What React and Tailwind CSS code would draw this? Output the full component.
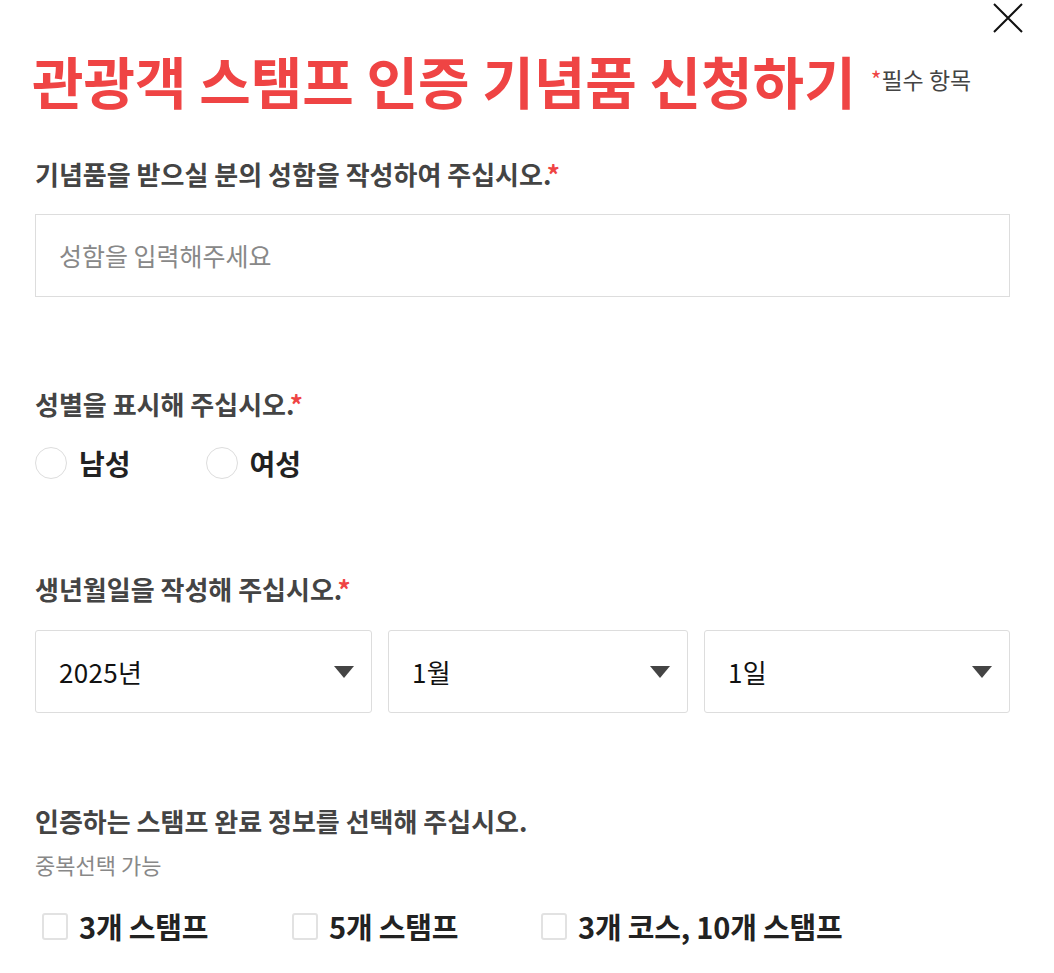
import React from "react";

const font = { fontFamily: '"Noto Sans CJK KR", "Noto Sans", sans-serif' };

function Label({ children, required }) {
  return (
    <div className="text-[26px] leading-none font-bold text-[#444444]">
      {children}
      {required && <span className="text-[#ef4444]">*</span>}
    </div>
  );
}

function Select({ value, className }) {
  return (
    <div className={"h-[83px] border border-[#dddddd] rounded-[3px] flex items-center justify-between pl-[23px] pr-[17px] " + className}>
      <span className="text-[26px] leading-none text-[#111111] tracking-[0.3px]">{value}</span>
      <svg width="20" height="12" viewBox="0 0 20 12">
        <polygon points="0,0 20,0 10,12" fill="#444444" />
      </svg>
    </div>
  );
}

function Radio({ label }) {
  return (
    <div className="flex items-center gap-[12px]">
      <div className="w-[32px] h-[32px] rounded-full border border-[#dddddd]" />
      <span className="text-[28px] leading-none font-bold text-[#222222]">{label}</span>
    </div>
  );
}

function Check({ label }) {
  return (
    <div className="flex items-center gap-[11px]">
      <div className="w-[26px] h-[27px] rounded-[3px] border-2 border-[#e2e2e2]" />
      <span className="text-[29px] leading-none font-bold text-[#222222] tracking-[-0.2px]">{label}</span>
    </div>
  );
}

export default function App() {
  return (
    <div style={font} className="w-[1054px] h-[973px] bg-white relative overflow-hidden">
      <button className="absolute right-[31px] top-[3px] w-[30px] h-[30px]">
        <svg width="30" height="30" viewBox="0 0 30 30">
          <path d="M1 1 L29 29 M29 1 L1 29" stroke="#111" strokeWidth="2" />
        </svg>
      </button>
      <div className="pl-[35px] pr-[44px] pt-[52px] flex flex-col">
        <div className="flex items-start gap-[15px]">
          <h1 className="text-[56px] leading-none font-bold text-[#ef4444] -ml-[3px]">
            관광객 스탬프 인증 기념품 신청하기
          </h1>
          <span className="text-[23px] leading-none text-[#444444] mt-[16px]">
            <span className="text-[#ef4444]">*</span>필수 항목
          </span>
        </div>

        <div className="mt-[53px]">
          <Label required>기념품을 받으실 분의 성함을 작성하여 주십시오.</Label>
          <div className="mt-[27px] h-[83px] border border-[#dddddd] flex items-center pl-[23px]">
            <span className="text-[25px] leading-none text-[#888888]">성함을 입력해주세요</span>
          </div>
        </div>

        <div className="mt-[94px]">
          <Label required>성별을 표시해 주십시오.</Label>
          <div className="mt-[30px] flex gap-[75px]">
            <Radio label="남성" />
            <Radio label="여성" />
          </div>
        </div>

        <div className="mt-[97px]">
          <Label required>생년월일을 작성해 주십시오.</Label>
          <div className="mt-[28px] flex gap-[16px]">
            <Select value="2025년" className="w-[337px]" />
            <Select value="1월" className="w-[300px]" />
            <Select value="1일" className="flex-1" />
          </div>
        </div>

        <div className="mt-[95px]">
          <Label>인증하는 스탬프 완료 정보를 선택해 주십시오.</Label>
          <div className="mt-[19px] text-[22px] leading-none text-[#888888]">중복선택 가능</div>
          <div className="mt-[37px] flex pl-[7px]">
            <div className="w-[250px]"><Check label="3개 스탬프" /></div>
            <div className="w-[249px]"><Check label="5개 스탬프" /></div>
            <Check label="3개 코스, 10개 스탬프" />
          </div>
        </div>
      </div>
    </div>
  );
}
